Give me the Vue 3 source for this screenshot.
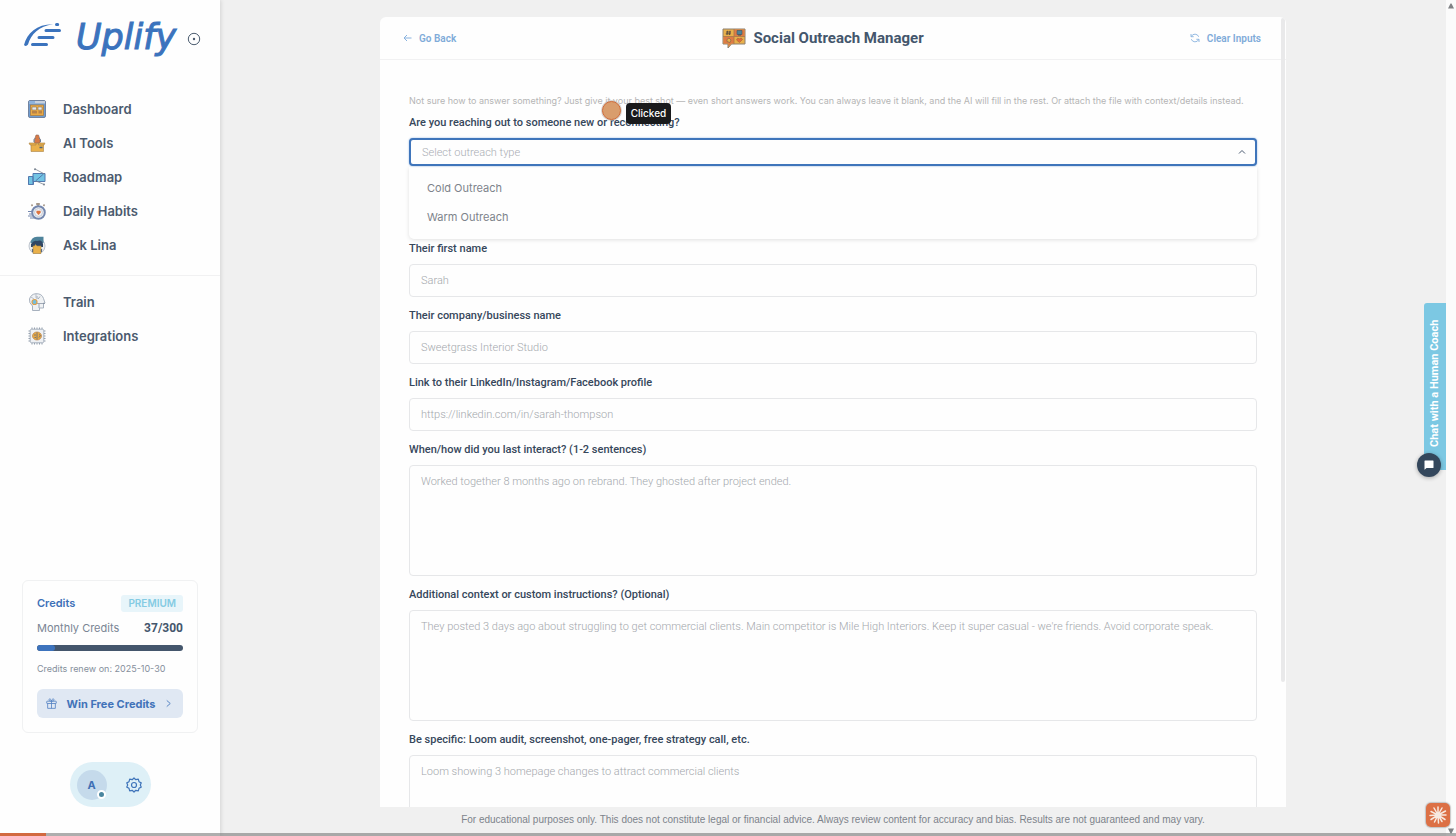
<script setup>
import { ref } from 'vue'

const mainNav = [
  { label: 'Dashboard', icon: 'dashboard' },
  { label: 'AI Tools', icon: 'tools' },
  { label: 'Roadmap', icon: 'roadmap' },
  { label: 'Daily Habits', icon: 'habits' },
  { label: 'Ask Lina', icon: 'lina' },
]
const extraNav = [
  { label: 'Train', icon: 'train' },
  { label: 'Integrations', icon: 'integrations' },
]

const outreachTypes = ['Cold Outreach', 'Warm Outreach']
const outreach = ref('')

const fields = [
  { id: 'first-name', label: 'Their first name', placeholder: 'Sarah' },
  { id: 'company', label: 'Their company/business name', placeholder: 'Sweetgrass Interior Studio' },
  { id: 'profile', label: 'Link to their LinkedIn/Instagram/Facebook profile', placeholder: 'https://linkedin.com/in/sarah-thompson' },
  { id: 'last', area: true, label: 'When/how did you last interact? (1-2 sentences)', placeholder: 'Worked together 8 months ago on rebrand. They ghosted after project ended.' },
  { id: 'context', area: true, label: 'Additional context or custom instructions? (Optional)', placeholder: "They posted 3 days ago about struggling to get commercial clients. Main competitor is Mile High Interiors. Keep it super casual - we're friends. Avoid corporate speak." },
  { id: 'offer', area: true, label: 'Be specific: Loom audit, screenshot, one-pager, free strategy call, etc.', placeholder: 'Loom showing 3 homepage changes to attract commercial clients' },
]

const used = 37
const total = 300
</script>

<template>
  <div class="app">
    <aside class="sidebar">
      <div class="brand">
        <svg class="brand-mark" viewBox="0 0 38 24" width="38" height="24">
          <path d="M0 22C3 10 13 1 29 1.2C15 3 7 11 4 21.5Q2 24 0 22Z" fill="#3b73bd" />
          <g stroke="#3b73bd" stroke-width="3" stroke-linecap="round">
            <path d="M32.5 1.5h1.2M22 7.500h13.500M15 14.500h14M8.500 21.500h14" />
          </g>
        </svg>
        <span class="brand-name">Uplify</span>
        <button class="pin" aria-label="Pin sidebar">
          <svg viewBox="0 0 14 14" width="14" height="14"><circle cx="7" cy="7" r="5.700" fill="none" stroke="#4c5d70" /><circle cx="7" cy="7" r="1.200" fill="#4c5d70" /></svg>
        </button>
      </div>

      <nav>
        <ul v-for="(group, g) in [mainNav, extraNav]" :key="g" class="nav-group">
          <li v-for="item in group" :key="item.label">
            <a href="#" class="nav-link">
              <svg class="nav-icon" viewBox="0 0 18 18" width="18" height="18">
                <template v-if="item.icon === 'dashboard'">
                  <rect x=".5" y=".5" width="17" height="17" rx="1.500" fill="#6f9cd0" stroke="#7183a0" />
                  <path d="M1 1h16v2.500H1z" fill="#c7d0dd" /><path d="M1 1h6v2.500H1z" fill="#8db2dc" />
                  <rect x="2.500" y="5" width="13" height="10.500" fill="#e9aa45" stroke="#a9793f" stroke-width=".7" />
                  <path d="M4 7h4.500v3H4zM10 7h4v3h-4z" fill="#e6e8ec" stroke="#8a7455" stroke-width=".6" />
                  <path d="M4 11h5v2.500H4zM10.500 11h3.500v2.500h-3.500z" fill="#b98247" />
                </template>
                <template v-else-if="item.icon === 'tools'">
                  <path d="M6.500 9V5.500L8 1h2.500L12 5.500V9z" fill="#d87a46" stroke="#8f6a5a" stroke-width=".6" />
                  <path d="M6 8V5.500L7.500 4M12.500 8V5.500L11 4" stroke="#6b7c93" fill="none" />
                  <path d="M3 9.500h12.500v8H3z" fill="#e9b04a" stroke="#a98244" stroke-width=".6" />
                  <path d="M1 9h7v2H2zM10.500 9H17l-1 2h-5.500z" fill="#e9b04a" stroke="#a98244" stroke-width=".6" />
                  <path d="M11.500 13.500h3" stroke="#50657a" stroke-width="1.500" />
                </template>
                <template v-else-if="item.icon === 'roadmap'">
                  <path d="M.5 8.500H5V16.500H.5zM5 5.500h12v8H5z" fill="#72c3e3" stroke="#5278ae" />
                  <path d="M5.500 13.500v3H.5M7.500 13L15.500 6" fill="none" stroke="#5278ae" />
                  <path d="M7 1l9.500 5M8 13l8 3.500" fill="none" stroke="#7b8592" stroke-width=".8" />
                  <circle cx="7" cy="1.200" r="1" fill="#7b8592" /><circle cx="16" cy="16.500" r="1" fill="#7b8592" />
                </template>
                <template v-else-if="item.icon === 'habits'">
                  <path d="M8 2h4M10 1v3M4.500 4l-1-1.500M15.500 4l1-1.500" stroke="#a09182" stroke-width="1.500" />
                  <circle cx="10.500" cy="10.500" r="6.300" fill="#f1f2f5" stroke="#7487ae" stroke-width="2" />
                  <circle cx="10.500" cy="10.500" r="4" fill="none" stroke="#c5cbd5" />
                  <path d="M10.500 13L8.300 10.500l.2-1.700h4l.3 1.700z" fill="#dd7340" />
                  <path d="M0 9.500h4.500M1 12h4M0 14h5M2 16h5" stroke="#7487ae" />
                </template>
                <template v-else-if="item.icon === 'lina'">
                  <circle cx="9" cy="10" r="8" fill="#eceef1" stroke="#bfc6cf" />
                  <path d="M2.500 7Q3 1 9 .7H15.500V7z" fill="#4e839b" /><path d="M3 8Q6 4 9 5Q14 3 15 8V11H3z" fill="#314764" />
                  <path d="M5 10h1.500l1-1.500L9 10h4v7.500H5z" fill="#e9b04a" stroke="#aa8647" stroke-width=".6" />
                  <path d="M4.500 13v3M13.500 13v3" stroke="#5b6b80" stroke-width="1.200" />
                </template>
                <template v-else-if="item.icon === 'train'">
                  <path d="M4.500 17.500V13Q.8 10 1.500 6Q3 1 8 .7Q14 .5 15.500 5.500L17 10H15.500v5h-4v2.500z" fill="#f0f2f4" stroke="#a7b1be" />
                  <path d="M9 10.500h8M9 3v3M12 3.500L10 6M11 11v4" stroke="#7d8a9b" stroke-width=".7" fill="none" />
                  <circle cx="6.500" cy="9" r="2.500" fill="#72bfe0" stroke="#dda04d" stroke-width="1.200" />
                  <path d="M3 4l3 2M8 1v4" stroke="#b7bec8" />
                </template>
                <template v-else>
                  <path d="M4 .5v2M6.500 .5v2M9 .5v2M11.500 .5v2M14 .5v2M4 15.500v2M6.500 15.500v2M9 15.500v2M11.500 15.500v2M14 15.500v2M.5 4h2M.5 6.500h2M.5 9h2M.5 11.500h2M.5 14h2M15.500 4h2M15.500 6.500h2M15.500 9h2M15.500 11.500h2M15.500 14h2" stroke="#919dab" />
                  <rect x="2.200" y="2.200" width="13.600" height="13.600" rx="1.500" fill="#eef0f3" stroke="#a7b1be" />
                  <ellipse cx="9" cy="9" rx="4.500" ry="4" fill="#e9aa45" stroke="#b9834a" stroke-width=".7" />
                  <path d="M9 5.500v7M6 8h2M11 7.500l1.500 1-1.500 2M6.500 10.500H8" stroke="#6e7076" stroke-width=".9" fill="none" />
                </template>
              </svg>
              {{ item.label }}
            </a>
          </li>
        </ul>
      </nav>

      <section class="credits">
        <div class="row">
          <h2>Credits</h2>
          <span class="badge">PREMIUM</span>
        </div>
        <div class="row monthly">
          <span>Monthly Credits</span>
          <strong>{{ used }}/{{ total }}</strong>
        </div>
        <div class="meter"><div class="meter-fill" :style="{ width: (used / total) * 100 + '%' }"></div></div>
        <p class="renew">Credits renew on: 2025-10-30</p>
        <button class="win">
          <svg viewBox="0 0 12 12" width="11" height="11" fill="none" stroke="#5583c3" stroke-width=".9"><rect x=".8" y="3.500" width="10.400" height="2.500" rx=".5" /><path d="M1.800 6v5.300h8.400V6M6 3.500v7.800M6 3.500C4 3.500 3 2.700 3.200 1.700S5.500.5 6 3.500C6.500.5 8.500.7 8.800 1.700S8 3.500 6 3.500" /></svg>
          <span>Win Free Credits</span>
          <svg viewBox="0 0 8 10" width="7" height="9" fill="none" stroke="#5583c3" stroke-width="1.100"><path d="M2 1.500L6 5L2 8.500" /></svg>
        </button>
      </section>

      <div class="account">
        <button class="avatar" aria-label="Account">A<i class="status"></i></button>
        <button class="gear" aria-label="Settings">
          <svg viewBox="0 0 16 16" width="16" height="16" fill="none" stroke="#3f74ba" stroke-width="1.200" stroke-linejoin="round"><path d="M8 1L9.800 2.700L12.300 2.200L13 4.700L15.200 5.900L14.300 8L15.200 10.100L13 11.300L12.300 13.800L9.800 13.300L8 15L6.200 13.300L3.700 13.800L3 11.300L.8 10.100L1.700 8L.8 5.900L3 4.700L3.700 2.200L6.200 2.700Z" /><circle cx="8" cy="8" r="2.500" /></svg>
        </button>
      </div>
    </aside>

    <main class="main">
      <div class="panel">
        <header class="panel-head">
          <button class="head-action">
            <svg viewBox="0 0 9 8" width="9" height="8" fill="none" stroke="#88b2df"><path d="M8.500 4H1M4 1L1 4L4 7" /></svg>
            Go Back
          </button>
          <h1>
            <svg viewBox="0 0 24 21" width="24" height="21">
              <path d="M1 1H23V16H9.500L6 20V16H1Z" fill="#e9b04a" stroke="#8d8071" />
              <path d="M12 1.500h10.500v7H12zM1.500 8.500H12v7H9.300L6.500 18.500V15.500h-5z" fill="#de7b45" />
              <path d="M12 1v15M1 8.500h22" stroke="#a7774b" stroke-width=".8" />
              <path d="M5.500 2.800L5 7M8 2.800L7.500 7M4 4h5M3.800 5.800h5" stroke="#55473d" stroke-width=".9" />
              <path d="M15 2.500h5v4h-5z" fill="#4f8398" stroke="#43545f" stroke-width=".6" /><path d="M16 7h3" stroke="#43545f" />
              <path d="M5 13.500v-2l2-1.500 2 2-1 2.500z" fill="#e9b04a" stroke="#74624d" stroke-width=".6" />
              <path d="M17.500 14.500L14.500 12l1-1.800 2 .6 1.800-.8 1.200 1.500z" fill="#e06c38" stroke="#a35f3b" stroke-width=".6" />
            </svg>
            Social Outreach Manager
          </h1>
          <button class="head-action">
            <svg viewBox="0 0 10 10" width="10" height="10" fill="none" stroke="#88b2df" stroke-width=".9"><path d="M1 1v2.700h2.700M1.300 3.500A4 4 0 0 1 8.700 3.800M9 9V6.300H6.300M8.700 6.500A4 4 0 0 1 1.300 6.200" /></svg>
            Clear Inputs
          </button>
        </header>

        <form class="form" @submit.prevent>
          <p class="hint">Not sure how to answer something? Just give it your best shot — even short answers work. You can always leave it blank, and the AI will fill in the rest. Or attach the file with context/details instead.</p>

          <div class="field open">
            <label for="outreach">Are you reaching out to someone new or reconnecting?</label>
            <div class="select-box">
              <select id="outreach" v-model="outreach">
                <option value="" disabled>Select outreach type</option>
                <option v-for="t in outreachTypes" :key="t">{{ t }}</option>
              </select>
              <svg viewBox="0 0 8 6" width="8" height="6" fill="none" stroke="#4a5a70"><path d="M1 4.500L4 1.500L7 4.500" /></svg>
            </div>
            <ul class="menu">
              <li v-for="t in outreachTypes" :key="t">
                <button type="button" @click="outreach = t">{{ t }}</button>
              </li>
            </ul>
          </div>

          <div v-for="f in fields" :key="f.id" class="field">
            <label :for="f.id">{{ f.label }}</label>
            <textarea v-if="f.area" :id="f.id" :placeholder="f.placeholder"></textarea>
            <input v-else :id="f.id" type="text" :placeholder="f.placeholder" />
          </div>
        </form>
        <div class="panel-scroll"></div>
      </div>
      <footer class="legal">For educational purposes only. This does not constitute legal or financial advice. Always review content for accuracy and bias. Results are not guaranteed and may vary.</footer>
    </main>

    <div class="page-scroll">
      <svg viewBox="0 0 8 6" width="8" height="6"><path d="M1 5.500L3.500 .5h1L7 5.500z" fill="#808285" /></svg>
      <svg viewBox="0 0 8 6" width="8" height="6"><path d="M1 .5L3.500 5.500h1L7 .5z" fill="#808285" /></svg>
    </div>

    <div class="coach">
      <button class="coach-tab">Chat with a Human Coach</button>
      <button class="chat" aria-label="Open chat">
        <svg viewBox="0 0 10 10" width="10" height="10"><path d="M1 .5h8q.5 0 .5.5v6.500q0 .5-.5.5H2.500L.5 9.700V1Q.5.5 1 .5z" fill="#fff" /></svg>
      </button>
    </div>

    <div class="click-dot"></div>
    <div class="click-tip">Clicked</div>

    <div class="timeline"><div class="timeline-played"></div></div>
    <div class="spark">
      <svg viewBox="-10 -10 20 20" width="20" height="20" stroke="#f7e9df" stroke-width="1.500" stroke-linecap="round">
        <path d="M0 0L0-8M0 0L4-7M0 0L7.500-4M0 0L8 0M0 0L7 4.500M0 0L4 6.500M0 0L.5 8M0 0L-3.500 7M0 0L-7 4.500M0 0L-8 .5M0 0L-7-3.500M0 0L-4-7" />
      </svg>
    </div>
  </div>
</template>

<style>
body {
  background: #f0f0f0;
}
</style>

<style scoped>
* {
  box-sizing: border-box;
}
.app {
  display: flex;
  height: 100vh;
  overflow: hidden;
  font-family: Roboto, "Liberation Sans", sans-serif;
  color: #44566c;
}
button {
  border: 0;
  padding: 0;
  background: none;
  font: inherit;
  color: inherit;
  cursor: pointer;
}
svg {
  display: block;
  flex: none;
}
ul {
  list-style: none;
  margin: 0;
  padding: 0;
}

.sidebar {
  display: flex;
  flex-direction: column;
  flex: none;
  width: 220px;
  padding-bottom: 29px;
  background: #fefefe;
  box-shadow: 1px 0 4px rgba(0, 0, 0, 0.12);
  font-family: Inter, sans-serif;
}
.brand {
  display: flex;
  align-items: center;
  height: 78px;
  margin-bottom: 14px;
  padding-left: 24px;
}
.brand-mark {
  margin-bottom: 8px;
}
.brand-name {
  width: 111px;
  margin-left: 14px;
  padding-bottom: 4px;
  -webkit-text-stroke: 1px #3b73bd;
  font-family: "DejaVu Sans", sans-serif;
  font-size: 35px;
  font-style: italic;
  line-height: 40px;
  color: #3b73bd;
}
.nav-group + .nav-group {
  margin-top: 13px;
  padding-top: 9px;
  border-top: 1px solid #f1f1f2;
}
.nav-link {
  display: flex;
  align-items: center;
  gap: 17px;
  height: 34px;
  padding-left: 28px;
  font-size: 13px;
  font-weight: 600;
  color: #4b5a6e;
  text-decoration: none;
}

.credits {
  margin: auto 22px 29px;
  padding: 14px;
  border: 1px solid #f0f1f2;
  border-radius: 6px;
}
.row {
  display: flex;
  align-items: center;
  justify-content: space-between;
}
.credits h2 {
  margin: 0;
  font-size: 11px;
  font-weight: 600;
  line-height: 17px;
  color: #3d70b8;
}
.badge {
  padding: 0 7px;
  border-radius: 3px;
  background: #e8f5fa;
  font-size: 10px;
  font-weight: 600;
  line-height: 17px;
  color: #84cbe3;
}
.monthly {
  margin-top: 8px;
  font-size: 11px;
  line-height: 17px;
  color: #7a8594;
}
.monthly strong {
  font-family: Roboto, sans-serif;
  font-size: 12px;
  color: #44566c;
}
.meter {
  height: 6px;
  margin-top: 8px;
  border-radius: 3px;
  overflow: hidden;
  background: #44566c;
}
.meter-fill {
  height: 100%;
  border-radius: 3px;
  background: #3d73bd;
}
.renew {
  margin: 10px 0 12px;
  font-size: 9px;
  line-height: 16px;
  color: #858f9c;
}
.win {
  display: flex;
  align-items: center;
  justify-content: space-between;
  width: 100%;
  height: 29px;
  padding: 0 11px 0 9px;
  border-radius: 6px;
  background: #e0e8f3;
  font-size: 11px;
  font-weight: 700;
  color: #4273b9;
}
.account {
  display: flex;
  align-items: center;
  justify-content: space-between;
  align-self: center;
  width: 81px;
  height: 45px;
  padding: 0 9px 0 7px;
  border-radius: 23px;
  background: #def0f7;
}
.avatar {
  position: relative;
  width: 30px;
  height: 30px;
  border-radius: 50%;
  background: #c5daeb;
  font-size: 11px;
  font-weight: 700;
  color: #3f6fb4;
}
.status {
  position: absolute;
  right: 1px;
  bottom: 1px;
  width: 9px;
  height: 9px;
  border: 2px solid #fff;
  border-radius: 50%;
  background: #4a869f;
}

.main {
  display: flex;
  flex: 1;
  flex-direction: column;
  align-items: center;
  min-width: 0;
  padding-top: 17px;
}
.panel {
  position: relative;
  flex: 1;
  width: 100%;
  max-width: 906px;
  min-height: 0;
  overflow: hidden;
  border-radius: 6px 6px 0 0;
  background: #fefefe;
}
.panel-head {
  display: flex;
  align-items: center;
  justify-content: space-between;
  height: 43px;
  padding: 0 25px 0 23px;
  border-bottom: 1px solid #f1f1f2;
}
.head-action {
  display: flex;
  align-items: center;
  gap: 7px;
  font-size: 10px;
  font-weight: 600;
  color: #80abd9;
}
h1 {
  display: flex;
  align-items: center;
  gap: 7px;
  margin: 0;
  font-size: 15px;
  font-weight: 700;
  color: #44566c;
}
.form {
  padding: 32px 29px 0;
}
.hint {
  margin: 0 0 5px;
  font-family: Inter, sans-serif;
  font-size: 9px;
  line-height: 17px;
  color: #b5b5b5;
  white-space: nowrap;
}
.field {
  margin-bottom: 10px;
}
.field.open {
  margin-bottom: 1px;
}
label {
  display: block;
  margin-bottom: 7px;
  font-size: 11px;
  font-weight: 500;
  line-height: 17px;
  color: #36475b;
}
input,
textarea,
select {
  display: block;
  width: 100%;
  height: 33px;
  padding: 0 11px;
  border: 1px solid #e6e7e9;
  border-radius: 4px;
  outline: none;
  background: #fefefe;
  font: 300 11px Roboto, sans-serif;
  color: #44566c;
}
textarea {
  height: 111px;
  padding-top: 9px;
  resize: none;
}
input::placeholder,
textarea::placeholder {
  color: #a4a8ad;
}
.select-box {
  position: relative;
}
.select-box svg {
  position: absolute;
  top: 11px;
  right: 11px;
}
select {
  appearance: none;
  height: 28px;
  border: 2px solid #3f75bb;
  box-shadow: 0 0 2px #8db4e2;
  color: #a9adb3;
}
.menu {
  margin-top: 1px;
  padding: 6px 0 8px;
  border-radius: 0 0 5px 5px;
  background: #fefefe;
  box-shadow: 0 1px 4px rgba(0, 0, 0, 0.12);
}
.menu button {
  display: block;
  width: 100%;
  height: 29px;
  padding-left: 18px;
  font: 400 11px Inter, sans-serif;
  text-align: left;
  color: #7d838b;
}
.panel-scroll {
  position: absolute;
  top: 1px;
  right: 1px;
  width: 4px;
  height: 84%;
  border-radius: 2px;
  background: #e9e9ea;
}
.legal {
  height: 29px;
  font: 400 10px/26px "Liberation Sans", sans-serif;
  color: #7d838b;
  white-space: nowrap;
}

.page-scroll {
  display: flex;
  flex: none;
  flex-direction: column;
  align-items: center;
  justify-content: space-between;
  width: 10px;
  padding: 3px 0 2px;
  background: #fbfbfb;
}
.coach {
  position: fixed;
  top: 303px;
  right: 10px;
}
.coach-tab {
  display: block;
  width: 22px;
  height: 167px;
  padding-top: 7px;
  border-radius: 0 3px 3px 0;
  background: #7cc8e3;
  font-size: 11px;
  font-weight: 700;
  line-height: 22px;
  color: #fff;
  writing-mode: vertical-rl;
  transform: rotate(180deg);
}
.chat {
  position: absolute;
  right: 5px;
  bottom: -7px;
  display: grid;
  place-items: center;
  width: 24px;
  height: 24px;
  border-radius: 50%;
  background: #34475c;
  box-shadow: 0 1px 4px rgba(0, 0, 0, 0.3);
}
.click-dot {
  position: fixed;
  top: 101px;
  left: 602px;
  width: 19px;
  height: 19px;
  border: 1px solid #cf6a38;
  border-radius: 50%;
  background: #d99d6d;
  box-shadow: 0 0 0 1px rgba(190, 185, 180, 0.6);
}
.click-tip {
  position: fixed;
  top: 103px;
  left: 626px;
  width: 45px;
  height: 21px;
  border-radius: 4px;
  background: #191a1c;
  font: 500 10px/21px Inter, sans-serif;
  text-align: center;
  color: #fff;
}
.timeline {
  position: fixed;
  right: 0;
  bottom: 0;
  left: 0;
  height: 3px;
  background: rgba(120, 120, 120, 0.6);
}
.timeline-played {
  width: 46px;
  height: 100%;
  background: #d2693f;
}
.spark {
  position: fixed;
  right: 6px;
  bottom: 9px;
  display: grid;
  place-items: center;
  width: 24px;
  height: 24px;
  border-radius: 5px;
  background: #dc7045;
  box-shadow: 0 0 1px 1px rgba(150, 150, 150, 0.5);
}
</style>
